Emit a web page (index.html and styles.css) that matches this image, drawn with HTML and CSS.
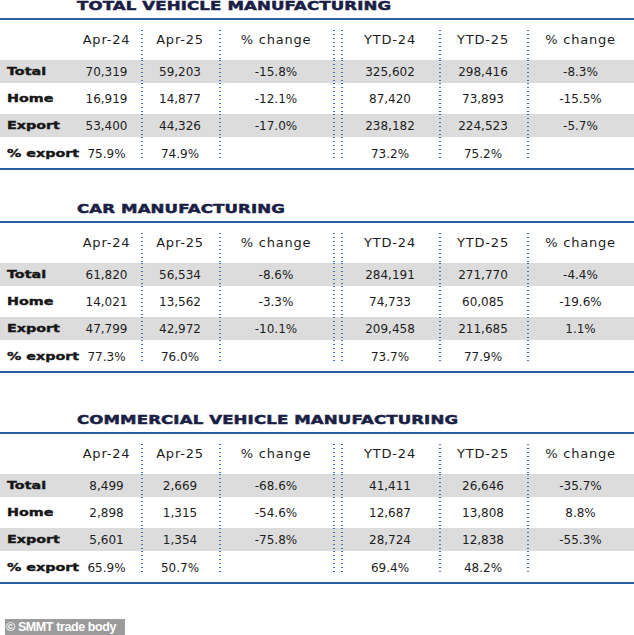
FILE: index.html
```html
<!DOCTYPE html>
<html lang="en">
<head>
<meta charset="utf-8">
<title>SMMT vehicle manufacturing</title>
<link rel="stylesheet" href="styles.css">
</head>
<body>
<div class="page">
  <section class="block">
    <h2 class="title"><span>TOTAL VEHICLE MANUFACTURING</span></h2>
    <div class="table">
      <div class="row head"><div class="label"></div><div>Apr-24</div><div>Apr-25</div><div>% change</div><div class="sp"></div><div>YTD-24</div><div>YTD-25</div><div>% change</div></div>
      <div class="row band"><div class="label"><span>Total</span></div><div>70,319</div><div>59,203</div><div>-15.8%</div><div class="sp"></div><div>325,602</div><div>298,416</div><div>-8.3%</div></div>
      <div class="row plain"><div class="label"><span>Home</span></div><div>16,919</div><div>14,877</div><div>-12.1%</div><div class="sp"></div><div>87,420</div><div>73,893</div><div>-15.5%</div></div>
      <div class="row band"><div class="label"><span>Export</span></div><div>53,400</div><div>44,326</div><div>-17.0%</div><div class="sp"></div><div>238,182</div><div>224,523</div><div>-5.7%</div></div>
      <div class="row last"><div class="label"><span>% export</span></div><div>75.9%</div><div>74.9%</div><div></div><div class="sp"></div><div>73.2%</div><div>75.2%</div><div></div></div>
    </div>
  </section>

  <section class="block block-2">
    <h2 class="title"><span>CAR MANUFACTURING</span></h2>
    <div class="table">
      <div class="row head"><div class="label"></div><div>Apr-24</div><div>Apr-25</div><div>% change</div><div class="sp"></div><div>YTD-24</div><div>YTD-25</div><div>% change</div></div>
      <div class="row band"><div class="label"><span>Total</span></div><div>61,820</div><div>56,534</div><div>-8.6%</div><div class="sp"></div><div>284,191</div><div>271,770</div><div>-4.4%</div></div>
      <div class="row plain"><div class="label"><span>Home</span></div><div>14,021</div><div>13,562</div><div>-3.3%</div><div class="sp"></div><div>74,733</div><div>60,085</div><div>-19.6%</div></div>
      <div class="row band"><div class="label"><span>Export</span></div><div>47,799</div><div>42,972</div><div>-10.1%</div><div class="sp"></div><div>209,458</div><div>211,685</div><div>1.1%</div></div>
      <div class="row last"><div class="label"><span>% export</span></div><div>77.3%</div><div>76.0%</div><div></div><div class="sp"></div><div>73.7%</div><div>77.9%</div><div></div></div>
    </div>
  </section>

  <section class="block block-3">
    <h2 class="title"><span>COMMERCIAL VEHICLE MANUFACTURING</span></h2>
    <div class="table">
      <div class="row head"><div class="label"></div><div>Apr-24</div><div>Apr-25</div><div>% change</div><div class="sp"></div><div>YTD-24</div><div>YTD-25</div><div>% change</div></div>
      <div class="row band"><div class="label"><span>Total</span></div><div>8,499</div><div>2,669</div><div>-68.6%</div><div class="sp"></div><div>41,411</div><div>26,646</div><div>-35.7%</div></div>
      <div class="row plain"><div class="label"><span>Home</span></div><div>2,898</div><div>1,315</div><div>-54.6%</div><div class="sp"></div><div>12,687</div><div>13,808</div><div>8.8%</div></div>
      <div class="row band"><div class="label"><span>Export</span></div><div>5,601</div><div>1,354</div><div>-75.8%</div><div class="sp"></div><div>28,724</div><div>12,838</div><div>-55.3%</div></div>
      <div class="row last"><div class="label"><span>% export</span></div><div>65.9%</div><div>50.7%</div><div></div><div class="sp"></div><div>69.4%</div><div>48.2%</div><div></div></div>
    </div>
  </section>

  <div class="credit">© SMMT trade body</div>
</div>
</body>
</html>
```

FILE: styles.css
```css
html, body {
  margin: 0;
  padding: 0;
  background: #ffffff;
}

.page {
  width: 634px;
  font-family: "DejaVu Sans", sans-serif;
  color: #1d1d1d;
}

.block-2 {
  margin-top: 33px;
}

.block-3 {
  margin-top: 41px;
}

.title {
  margin: 0;
  padding-left: 77px;
  height: 12px;
  font: 700 12px/12px "DejaVu Sans", sans-serif;
  letter-spacing: 0.1px;
  color: #1b1f46;
  white-space: nowrap;
  -webkit-text-stroke: 0.5px #1b1f46;
}

.title span {
  display: inline-block;
  transform: scaleX(1.38);
  transform-origin: left center;
}

.table {
  margin-top: 6px;
  border-top: 2px solid #2b5fa4;
  border-bottom: 2px solid #2b5fa4;
  padding: 10px 0 7px;
}

.row {
  display: grid;
  grid-template-columns: 72px 69px 78px 114px 8px 98px 88px 1fr;
  font-size: 12px;
  line-height: 14px;
}

.row > div {
  display: flex;
  align-items: center;
  justify-content: center;
  white-space: nowrap;
}

.row > div:nth-child(n+3) {
  background-image: linear-gradient(to bottom, #4673b3 0, #4673b3 1.5px, transparent 1.5px);
  background-size: 1.5px 4px;
  background-repeat: repeat-y;
  background-position: 0 0;
}

.row .label {
  justify-content: flex-start;
  padding-left: 7px;
  font: 700 11px/14px "DejaVu Sans", sans-serif;
  color: #161616;
  -webkit-text-stroke: 0.4px #161616;
}

.row .label span {
  display: inline-block;
  transform: scaleX(1.3);
  transform-origin: left center;
}

.head {
  height: 30px;
  font-size: 13px;
  line-height: 16px;
  letter-spacing: 0.8px;
}

.head > div {
  align-items: flex-start;
  padding-top: 2px;
}

.band {
  height: 23px;
  background-color: #dcdcdc;
}

.plain {
  height: 31px;
}

.last {
  height: 24px;
}

.last > div {
  align-items: flex-start;
  padding-top: 10px;
}

.credit {
  display: inline-block;
  margin: 35px 0 0 5px;
  padding: 0 9px 0 1px;
  background: #9b9b9b;
  color: #ffffff;
  font: 700 12.5px/17px "Liberation Sans", Arial, sans-serif;
  letter-spacing: -0.4px;
}
```
